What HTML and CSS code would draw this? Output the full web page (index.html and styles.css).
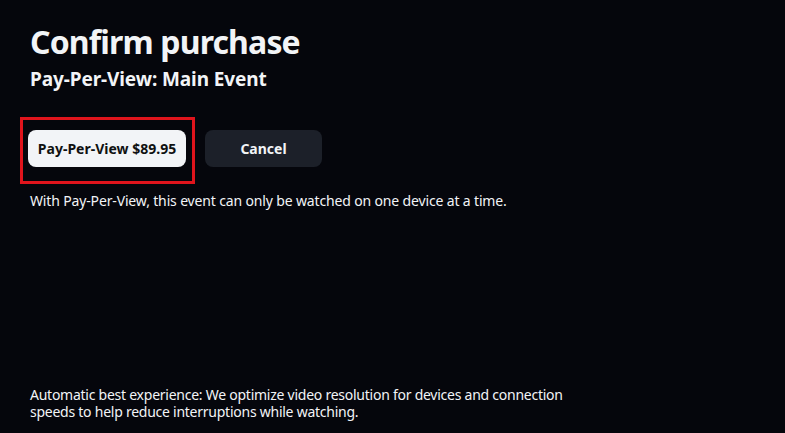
FILE: index.html
```html
<!DOCTYPE html>
<html lang="en">
<head>
<meta charset="utf-8">
<link rel="stylesheet" href="styles.css">
</head>
<body>
<main class="page">
  <header class="head">
    <h1 class="title">Confirm purchase</h1>
    <h2 class="subtitle">Pay-Per-View: Main Event</h2>
  </header>
  <div class="actions">
    <button class="btn btn-primary">Pay-Per-View $89.95<span class="focus-ring"></span></button>
    <button class="btn btn-secondary">Cancel</button>
  </div>
  <p class="note">With Pay-Per-View, this event can only be watched on one device at a time.</p>
  <p class="footer-note">Automatic best experience: We optimize video resolution for devices and connection speeds to help reduce interruptions while watching.</p>
</main>
</body>
</html>
```
FILE: styles.css
```css
html, body {
  margin: 0;
  padding: 0;
  height: 100%;
  background: #05060c;
}
body {
  font-family: "Noto Sans", "Open Sans", sans-serif;
  color: #f2f4f7;
}
.page {
  height: 433px;
  box-sizing: border-box;
  padding: 20px 30px 0 30px;
  display: flex;
  flex-direction: column;
}
.title {
  margin: 0;
  font-size: 32px;
  font-weight: 700;
  line-height: 44px;
  letter-spacing: -0.85px;
}
.subtitle {
  margin: 2px 0 0 0;
  font-size: 19px;
  font-weight: 700;
  line-height: 26px;
  letter-spacing: -0.1px;
}
.actions {
  display: flex;
  gap: 19px;
  margin-top: 38px;
  margin-left: -2px;
}
.btn {
  position: relative;
  border: none;
  border-radius: 8px;
  height: 37px;
  font-family: inherit;
  font-size: 14px;
  font-weight: 700;
  padding: 0;
  cursor: pointer;
}
.btn-primary {
  width: 158px;
  background: #f2f4f7;
  color: #0f1111;
}
.btn-secondary {
  width: 117px;
  background: #1c2029;
  color: #f2f4f7;
}
.focus-ring {
  position: absolute;
  left: -8px;
  top: -13px;
  width: 175px;
  height: 67px;
  box-sizing: border-box;
  border: 3px solid #e0141c;
  pointer-events: none;
}
.note {
  margin: 24px 0 0 0;
  font-size: 14px;
  line-height: 20px;
  letter-spacing: -0.15px;
}
.footer-note {
  margin: auto 0 13px 0;
  font-size: 14px;
  line-height: 17px;
  letter-spacing: -0.25px;
  max-width: 560px;
}
```
